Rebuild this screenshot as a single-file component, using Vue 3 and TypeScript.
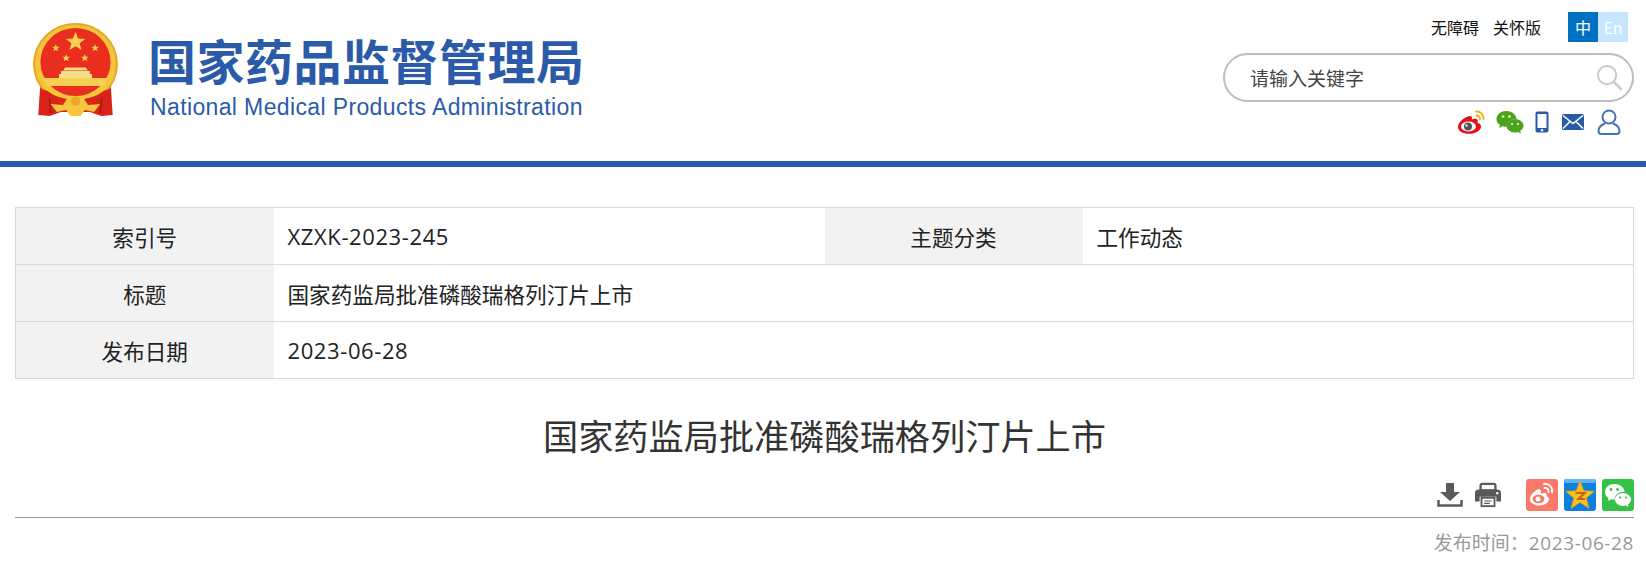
<template>
  <div class="page">
    <header class="header">
      <div class="brand">
        <svg class="emblem" viewBox="0 0 90 96" preserveAspectRatio="none" aria-hidden="true">
          <path d="M11 60 9 92l11 1 11-4h28l11 4 11-1-2-32z" fill="#d8231a" />
          <path d="M19 66l2 24M71 66l-2 24" stroke="#a8170f" stroke-width="1.500" />
          <circle cx="45" cy="41" r="41" fill="#f5c63c" />
          <circle cx="45" cy="41" r="40" fill="none" stroke="#e8a92a" stroke-width="2" />
          <circle cx="45" cy="39" r="34" fill="#e92e1f" />
          <polygon v-for="s in emblemStars" :key="s.x" :points="starPoints(s.x, s.y, s.r)" fill="#f7cf52" />
          <path d="M35 44.500h20l2 3H33zM31 48h28v3H31zM29 51h32v4H29z" fill="#f9dc86" />
          <path d="M13 55h64l-4 8H17z" fill="#f7cf52" />
          <path d="M12 66c4 8 12 14 33 16 21-2 29-8 33-16l-6 2c-6 5-14 8-27 9-13-1-21-4-27-9z" fill="#d8231a" />
          <path d="M21 81l12 1 3-5c2-5 16-5 18 0l3 5 12-1-6 8-9-2-4 6H40l-4-6-9 2z" fill="#f5c63c" />
          <circle cx="45" cy="78" r="4.500" fill="#e8a92a" />
        </svg>
        <div class="brand-text">
          <div class="brand-cn">国家药品监督管理局</div>
          <div class="brand-en">National Medical Products Administration</div>
        </div>
      </div>

      <div class="tools">
        <div class="tool-links">
          <a class="tool-link">无障碍</a>
          <a class="tool-link">关怀版</a>
          <div class="lang">
            <span class="lang-item lang-item--active">中</span>
            <span class="lang-item">En</span>
          </div>
        </div>
        <div class="search">
          <span class="search-text">请输入关键字</span>
          <svg class="search-icon" viewBox="0 0 28 28" aria-hidden="true">
            <circle cx="11.500" cy="11.500" r="9.500" fill="none" stroke="#c9c9c9" stroke-width="2" />
            <path d="M18.500 18.500 26 26" stroke="#c9c9c9" stroke-width="2.500" stroke-linecap="round" />
          </svg>
        </div>
        <div class="quick-icons">
          <svg class="q-weibo" viewBox="0 0 28 24" aria-hidden="true">
            <path d="M12 6C6 7 0 12.500 0 17c0 4 5 6.800 11 6.800 6.500 0 12-3.200 12-7.300 0-2.500-2-3.400-3.500-3.800.8-2.300.2-3.700-2.300-3.900-1.500-.1-2.500.4-3.400.8.500-2.200.2-3.600-1.800-3.600z" fill="#e60f15" />
            <ellipse cx="10.500" cy="16.500" rx="7.500" ry="5" fill="#fff" />
            <circle cx="10" cy="16.500" r="4" fill="#555" />
            <circle cx="8.500" cy="15.500" r="1.200" fill="#ddd" />
            <path d="M18 1.500c4-.5 8 3 7.500 7.500M18.500 5.500c2-.2 3.700 1.500 3.400 3.500" fill="none" stroke="#f0b323" stroke-width="2" stroke-linecap="round" />
          </svg>
          <svg class="q-wechat" viewBox="0 0 28 24" aria-hidden="true">
            <path d="M10.500 1C5 1 .5 4.500.5 9c0 2.500 1.300 4.500 3.500 6l-1 3 3.500-1.800c1.300.4 2.800.6 4.200.6 0-4.800 4-8 10-8C19.500 4 15.500 1 10.500 1z" fill="#4aa51a" />
            <path d="M19 9c-4.700 0-8.500 3-8.500 6.800s3.800 6.700 8.500 6.700c1 0 2-.1 3-.5l3 1.500-.8-2.700c2-1.300 3.300-3 3.300-5C27.500 12 23.700 9 19 9z" fill="#4aa51a" />
            <circle cx="7" cy="6.500" r="1.200" fill="#fff" />
            <circle cx="13.500" cy="6.500" r="1.200" fill="#fff" />
            <circle cx="16" cy="14" r="1" fill="#fff" />
            <circle cx="22" cy="14" r="1" fill="#fff" />
          </svg>
          <svg class="q-phone" viewBox="0 0 14 22" aria-hidden="true">
            <rect x="0.500" y="0.500" width="13" height="21" rx="2" fill="#2b5ba8" />
            <rect x="2.500" y="3" width="9" height="14" fill="#fff" />
            <circle cx="7" cy="19.300" r="1.200" fill="#fff" />
          </svg>
          <svg class="q-mail" viewBox="0 0 22 16" aria-hidden="true">
            <rect width="22" height="16" rx="1.500" fill="#2b5ba8" />
            <path d="M1 1.500 11 9.500 21 1.500M1 14.500 8 7.500M21 14.500 14 7.500" fill="none" stroke="#fff" stroke-width="1.500" />
          </svg>
          <svg class="q-user" viewBox="0 0 24 26" aria-hidden="true">
            <circle cx="12" cy="8" r="6.500" fill="none" stroke="#4a6fb5" stroke-width="2" />
            <path d="M8 14.500C4 16 1.500 18.500 1.500 22c0 2 1 3 3 3h15c2 0 3-1 3-3 0-3.500-2.500-6-6.500-7.500" fill="none" stroke="#4a6fb5" stroke-width="2" />
          </svg>
        </div>
      </div>
    </header>

    <main class="content">
      <table class="meta">
        <colgroup>
          <col class="col-label" />
          <col />
          <col class="col-label" />
          <col />
        </colgroup>
        <tbody>
          <tr>
            <th>索引号</th>
            <td class="latin">XZXK-2023-245</td>
            <th>主题分类</th>
            <td>工作动态</td>
          </tr>
          <tr>
            <th>标题</th>
            <td colspan="3">{{ title }}</td>
          </tr>
          <tr>
            <th>发布日期</th>
            <td class="latin" colspan="3">{{ date }}</td>
          </tr>
        </tbody>
      </table>

      <h1 class="title">{{ title }}</h1>

      <div class="actions">
        <svg class="act-download" viewBox="0 0 26 26" aria-hidden="true">
          <path d="M9 1h8v9h6L13 19 3 10h6z" fill="#5a5a5a" />
          <path d="M1.500 18v5.500h23V18" fill="none" stroke="#5a5a5a" stroke-width="2.500" />
        </svg>
        <svg class="act-print" viewBox="0 0 28 26" aria-hidden="true">
          <path d="M6 8V3a2 2 0 0 1 2-2h12a2 2 0 0 1 2 2v5z" fill="none" stroke="#5a5a5a" stroke-width="2.500" />
          <path d="M4 7h20a4 4 0 0 1 4 4v9h-5v-5H5v5H0v-9a4 4 0 0 1 4-4z" fill="#5a5a5a" />
          <path d="M6 15h16v11H6z" fill="#5a5a5a" />
          <path d="M8 17h12v7H8z" fill="#fff" />
          <path d="M10 19.500h8M10 22h6" stroke="#5a5a5a" stroke-width="1.200" />
          <circle cx="24" cy="11" r="1.300" fill="#fff" />
        </svg>
        <div class="shares">
          <svg class="share" viewBox="0 0 32 32" aria-hidden="true">
            <rect width="32" height="32" rx="3" fill="#f9796a" />
            <path d="M13 10C8 12 4 16 4 20c0 4 4.500 6.500 9 6.500 6 0 10-3.500 10-6.500 0-2-2-2.500-2.500-3 .8-2-.4-3.500-3-3-1.200.2-2 .6-2.500.8.400-2-.3-5-2-4.800z" fill="#fff" />
            <ellipse cx="12.500" cy="20" rx="6" ry="4.200" fill="#f9796a" />
            <circle cx="12" cy="20" r="2.500" fill="#fff" />
            <path d="M18 5c5-1 9 3.500 8 8.500M18.500 9c2.500-.5 4.500 1.500 4 4" fill="none" stroke="#fff" stroke-width="1.800" stroke-linecap="round" />
          </svg>
          <svg class="share" viewBox="0 0 32 32" aria-hidden="true">
            <rect width="32" height="32" rx="3" fill="#0f7fe0" />
            <rect y="0" width="32" height="4" rx="2" fill="#5fb4f5" />
            <polygon :points="starPoints(16, 17, 15)" fill="#f9c21d" stroke="#e8a50c" stroke-width="1" />
            <path d="M11.500 14h9l-6 6h6.500" fill="none" stroke="#c8641a" stroke-width="2.200" />
          </svg>
          <svg class="share" viewBox="0 0 32 32" aria-hidden="true">
            <rect width="32" height="32" rx="3" fill="#36c147" />
            <path d="M12.500 5C7 5 3 8.500 3 13c0 2.500 1.300 4.600 3.500 6L6 22l3.200-1.800c1 .3 2.200.5 3.300.5 0-5 4-8 9.500-8h.8C21.800 8 17.500 5 12.500 5z" fill="#fff" />
            <path d="M21 14c-4.500 0-8 3-8 6.500s3.500 6.500 8 6.500c1 0 2-.2 2.800-.5l2.700 1.500-.6-2.500c2-1.200 3.100-3 3.100-5 0-3.500-3.500-6.500-8-6.500z" fill="#fff" />
            <circle cx="9" cy="10.500" r="1.400" fill="#36c147" />
            <circle cx="15.500" cy="10.500" r="1.400" fill="#36c147" />
            <circle cx="18" cy="18.500" r="1.100" fill="#36c147" />
            <circle cx="24" cy="18.500" r="1.100" fill="#36c147" />
          </svg>
        </div>
      </div>

      <div class="publish">发布时间：<span class="latin">{{ date }}</span></div>
    </main>
  </div>
</template>

<script setup lang="ts">
const title = '国家药监局批准磷酸瑞格列汀片上市'
const date = '2023-06-28'

const emblemStars = [
  { x: 45, y: 19, r: 10 },
  { x: 26, y: 25, r: 4 },
  { x: 64, y: 25, r: 4 },
  { x: 36, y: 35, r: 4 },
  { x: 54, y: 35, r: 4 }
]

const starPoints = (cx: number, cy: number, r: number) => {
  const points: string[] = []
  for (let i = 0; i < 10; i++) {
    const radius = i % 2 === 0 ? r : r * 0.42
    const angle = (Math.PI / 5) * i - Math.PI / 2
    points.push(`${(cx + radius * Math.cos(angle)).toFixed(2)},${(cy + radius * Math.sin(angle)).toFixed(2)}`)
  }
  return points.join(' ')
}
</script>

<style>
html,
body {
  margin: 0;
  background: #fff;
  overflow: hidden;
}
</style>

<style scoped>
.page {
  width: 1646px;
  font-family: "Noto Sans CJK SC", "Noto Sans", sans-serif;
  color: #333;
}

/* 头部 */
.header {
  height: 161px;
  border-bottom: 6px solid #2b5ba8;
  display: flex;
  justify-content: space-between;
  padding: 0 12px 0 29px;
}

.brand {
  display: flex;
  align-items: flex-start;
  gap: 28px;
  padding-top: 23px;
}

.emblem {
  width: 93px;
  height: 96px;
}

.brand-text {
  padding-top: 10px;
  color: #2b5ba8;
}

.brand-cn {
  margin-left: -2px;
  font-size: 48px;
  line-height: 52px;
  font-weight: 700;
  letter-spacing: 0.5px;
  white-space: nowrap;
}

.brand-en {
  font-family: "Liberation Sans", sans-serif;
  font-size: 23px;
  line-height: 26px;
  letter-spacing: 0.37px;
  margin-top: 9px;
  white-space: nowrap;
}

.tools {
  width: 411px;
  display: flex;
  flex-direction: column;
  padding-top: 12px;
}

.tool-links {
  display: flex;
  align-items: center;
  justify-content: flex-end;
  padding-right: 6px;
  height: 30px;
}

.tool-link {
  font-size: 16px;
  color: #111;
  margin-right: 14px;
}

.lang {
  display: flex;
  margin-left: 13px;
}

.lang-item {
  width: 30px;
  height: 30px;
  line-height: 30px;
  text-align: center;
  font-size: 16px;
  color: #fff;
  background: #c6e5ff;
}

.lang-item--active {
  background: #0071c1;
}

.search {
  margin-top: 11px;
  height: 49px;
  box-sizing: border-box;
  border: 2px solid #bdbdbd;
  border-radius: 25px;
  display: flex;
  align-items: center;
  justify-content: space-between;
  padding: 0 9px 0 25px;
}

.search-text {
  font-size: 19px;
  color: #444;
}

.search-icon {
  width: 27px;
  height: 27px;
}

.quick-icons {
  display: flex;
  align-items: center;
  justify-content: flex-end;
  padding: 7px 13px 0 0;
}

.q-weibo {
  width: 28px;
  height: 24px;
  margin-right: 10px;
}

.q-wechat {
  width: 28px;
  height: 24px;
  margin-right: 11px;
}

.q-phone {
  width: 14px;
  height: 22px;
  margin-right: 13px;
}

.q-mail {
  width: 22px;
  height: 16px;
  margin-right: 13px;
}

.q-user {
  width: 24px;
  height: 26px;
}

/* 内容 */
.content {
  padding: 40px 12px 0 15px;
}

.meta {
  width: 100%;
  table-layout: fixed;
  border-collapse: collapse;
  font-size: 21.600px;
}

.col-label {
  width: 258px;
}

.meta th,
.meta td {
  height: 57px;
  padding: 0;
  border-top: 1px solid #d9d9d9;
  border-bottom: 1px solid #d9d9d9;
  box-sizing: border-box;
  color: #222;
}

.meta tr > :first-child {
  border-left: 1px solid #d9d9d9;
}

.meta tr > :last-child {
  border-right: 1px solid #d9d9d9;
}

.meta th {
  background: #f2f2f2;
  font-weight: 400;
  text-align: center;
}

.meta td {
  padding-left: 14px;
}

.meta td.latin {
  font-size: 22px;
}

.latin {
  font-family: "Open Sans", "Noto Sans CJK SC", sans-serif;
  letter-spacing: 0.6px;
}

.title {
  margin: 0;
  padding-top: 32px;
  font-size: 35.200px;
  line-height: 48px;
  font-weight: 400;
  text-align: center;
  color: #333;
}

.actions {
  margin-top: 20px;
  display: flex;
  align-items: center;
  justify-content: flex-end;
  padding-bottom: 6px;
  border-bottom: 1px solid #999;
}

.act-download {
  width: 26px;
  height: 26px;
  margin-right: 12px;
}

.act-print {
  width: 26px;
  height: 26px;
  margin-right: 25px;
}

.shares {
  display: flex;
  gap: 6px;
}

.share {
  width: 32px;
  height: 32px;
}

.publish {
  margin-top: 12px;
  font-size: 19px;
  line-height: 24px;
  text-align: right;
  color: #999;
}
</style>
